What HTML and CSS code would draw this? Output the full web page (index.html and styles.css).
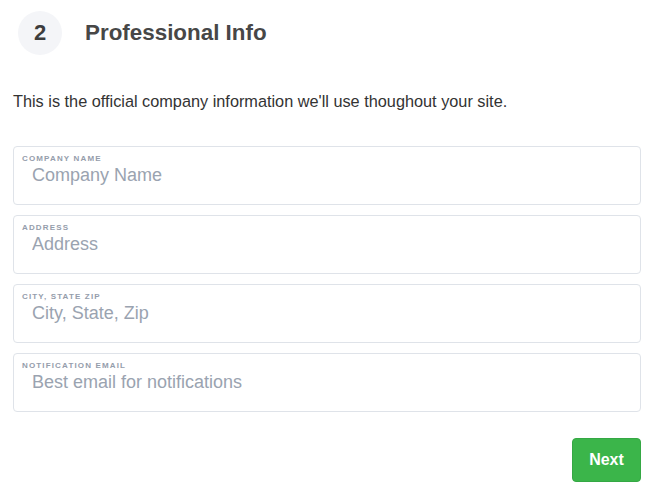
FILE: index.html
```html
<!DOCTYPE html>
<html>
<head>
<meta charset="utf-8">
<link rel="stylesheet" href="styles.css">
</head>
<body>
<div class="page">
  <div class="header">
    <div class="step">2</div>
    <h1 class="title">Professional Info</h1>
  </div>
  <p class="intro">This is the official company information we'll use thoughout your site.</p>
  <div class="fields">
    <label class="field">
      <span class="field-label">Company Name</span>
      <input class="field-input" type="text" placeholder="Company Name">
    </label>
    <label class="field">
      <span class="field-label">Address</span>
      <input class="field-input" type="text" placeholder="Address">
    </label>
    <label class="field">
      <span class="field-label">City, State Zip</span>
      <input class="field-input" type="text" placeholder="City, State, Zip">
    </label>
    <label class="field">
      <span class="field-label">Notification Email</span>
      <input class="field-input" type="text" placeholder="Best email for notifications">
    </label>
  </div>
  <div class="actions">
    <button class="btn-next" type="button">Next</button>
  </div>
</div>
</body>
</html>
```

FILE: styles.css
```css
* { box-sizing: border-box; }
html, body {
  margin: 0;
  padding: 0;
  background: #ffffff;
}
body {
  font-family: "Liberation Sans", Arial, sans-serif;
  color: #333;
}
.page {
  width: 654px;
  padding: 11px 13px 0 13px;
}
.header {
  display: flex;
  align-items: center;
  padding-left: 5px;
}
.step {
  width: 44px;
  height: 44px;
  border-radius: 50%;
  background: #f4f5f8;
  color: #3d3d3d;
  font-weight: bold;
  font-size: 22px;
  display: flex;
  align-items: center;
  justify-content: center;
}
.title {
  margin: 0 0 0 23px;
  font-size: 22.4px;
  font-weight: bold;
  color: #474747;
  line-height: 26px;
}
.intro {
  margin: 36px 0 0 0;
  font-size: 16.3px;
  line-height: 20px;
  color: #333;
}
.fields {
  margin-top: 35px;
  display: flex;
  flex-direction: column;
  gap: 10px;
}
.field {
  display: flex;
  flex-direction: column;
  height: 59px;
  border: 1px solid #dfe3e9;
  border-radius: 4px;
  padding: 7px 8px 0 8px;
}
.field-label {
  font-size: 8px;
  line-height: 10px;
  font-weight: bold;
  letter-spacing: 1.15px;
  text-transform: uppercase;
  color: #959dab;
}
.field-input {
  border: none;
  outline: none;
  padding: 0 0 0 10px;
  margin: 0;
  font-family: "Liberation Sans", Arial, sans-serif;
  font-size: 18px;
  line-height: 22px;
  height: 22px;
  color: #333;
  background: transparent;
  width: 100%;
}
.field-input::placeholder {
  color: #9aa3b0;
}
.actions {
  display: flex;
  justify-content: flex-end;
  margin-top: 26px;
}
.btn-next {
  width: 69px;
  height: 44px;
  border: 1px solid #35a844;
  border-radius: 4px;
  background: #3bb54a;
  color: #fff;
  font-family: "Liberation Sans", Arial, sans-serif;
  font-weight: bold;
  font-size: 16px;
  padding: 0;
}
```
